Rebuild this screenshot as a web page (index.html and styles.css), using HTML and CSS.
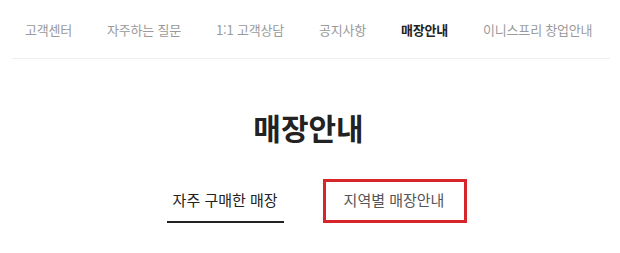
FILE: index.html
```html
<!DOCTYPE html>
<html lang="ko">
<head>
    <meta charset="UTF-8">
    <title>매장안내</title>
    <link rel="stylesheet" href="styles.css">
</head>
<body>
    <nav class="sub-nav">
        <a href="#">고객센터</a>
        <a href="#">자주하는 질문</a>
        <a href="#">1:1 고객상담</a>
        <a href="#">공지사항</a>
        <a href="#" class="active">매장안내</a>
        <a href="#">이니스프리 창업안내</a>
    </nav>

    <h1 class="page-title">매장안내</h1>

    <div class="tabs">
        <a href="#" class="tab on">자주 구매한 매장</a>
        <a href="#" class="tab marked">지역별 매장안내</a>
    </div>
</body>
</html>
```

FILE: styles.css
```css
body {
    margin: 0;
    background: #fff;
    font-family: "Noto Sans CJK KR", "Noto Sans", sans-serif;
    color: #222;
}

a {
    text-decoration: none;
    color: inherit;
}

.sub-nav {
    display: flex;
    gap: 35px;
    margin: 0 10px 0 12px;
    padding: 20px 0 18px 13px;
    border-bottom: 1px solid #eee;
    font-size: 13px;
    line-height: 20px;
    letter-spacing: -0.2px;
}

.sub-nav a {
    color: #9a9a9a;
}

.sub-nav a.active {
    color: #222;
    font-weight: bold;
}

.page-title {
    margin: 48px 0 0;
    padding-right: 3px;
    text-align: center;
    font-size: 30px;
    line-height: 40px;
    font-weight: bold;
    color: #222;
}

.tabs {
    display: flex;
    justify-content: center;
    align-items: flex-end;
    gap: 39px;
    margin-top: 32px;
    padding-left: 14px;
    font-size: 15px;
    line-height: 20px;
}

.tab {
    color: #555;
}

.tab.on {
    color: #222;
    padding: 0 6px 11px;
    border-bottom: 2px solid #222;
}

.tab.marked {
    padding: 8px 20px 10px 18px;
    border: 3px solid #d6262b;
}
```
